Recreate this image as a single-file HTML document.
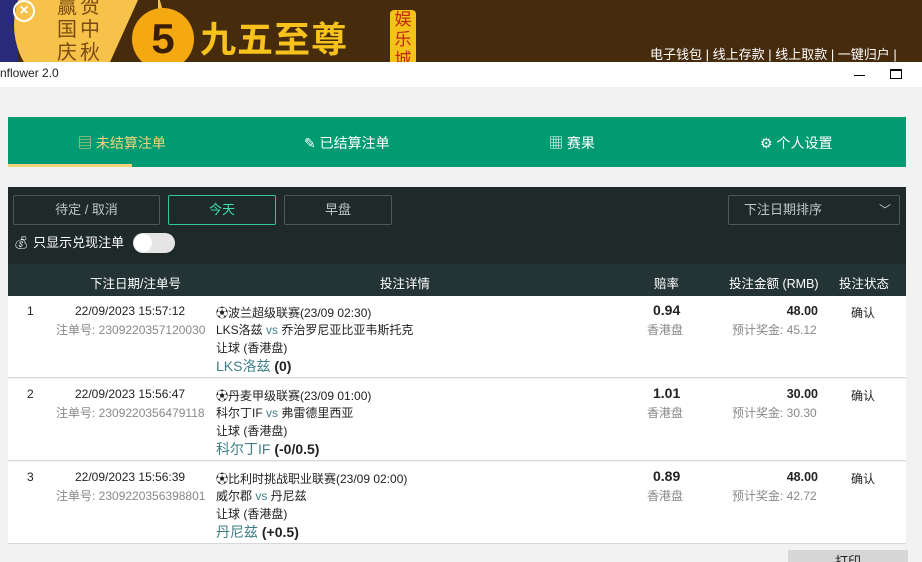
<!DOCTYPE html>
<html><head><meta charset="utf-8"><style>
*{margin:0;padding:0;box-sizing:border-box}
html,body{width:922px;height:562px;overflow:hidden}
body{background:#f2f2f2;font-family:"Liberation Sans","Noto Sans CJK SC",sans-serif;font-size:12px;color:#222;position:relative}
.a{position:absolute;white-space:nowrap}
.banner{left:0;top:0;width:922px;height:62px;background:#472b0d;overflow:hidden}
.nav{left:8px;top:117px;width:898px;height:50px;background:#009b72;color:#fff;font-size:14px}
.dark{left:8px;top:187px;width:898px;height:77px;background:#1e2a2a}
.th{left:8px;top:264px;width:898px;height:32px;background:#243434;color:#fff;font-size:12.5px}
.row{left:8px;width:898px;height:82px;background:#fff;border-bottom:1px solid #d8d8d8}
.btn{height:30px;border:1px solid #4d5757;color:#bfc5c5;font-size:13px;text-align:center;line-height:28px;border-radius:2px}
.g{color:#888}
.t{color:#3f7f86}
.amt{right:88px;top:8px;font-weight:bold;font-size:12.5px}
</style></head><body>
<div class="a banner">
 <div class="a" style="left:0;top:0;width:18px;height:62px;background:#2a2a7a"></div>
 <div class="a" style="left:14px;top:-50px;width:150px;height:150px;border-radius:50%;background:#f7c24a"></div>
 <div class="a" style="left:110px;top:0;width:0;height:0;border-left:28px solid transparent;border-bottom:62px solid #472b0d"></div>
 <div class="a" style="left:138px;top:0;width:20px;height:62px;background:#472b0d"></div>
 <div class="a" style="left:13px;top:0;width:22px;height:22px;border-radius:50%;border:2px solid #fff;color:#fff;font-size:16px;line-height:17px;text-align:center;font-weight:bold">×</div>
 <div class="a" style="left:57px;top:-4px;font-size:20px;line-height:23px;color:#7a4b10;width:46px;white-space:normal;letter-spacing:3px">赢贺国中庆秋</div>
 <div class="a" style="left:132px;top:8px;width:62px;height:62px;border-radius:50%;background:#f5a911;color:#3a1d05;font-size:42px;font-weight:bold;text-align:center;line-height:62px">5</div>
 <div class="a" style="left:200px;top:18px;font-size:36px;font-weight:bold;color:#f7c21c;line-height:44px;letter-spacing:1px">九五至尊</div>
 <div class="a" style="left:390px;top:10px;width:26px;height:56px;background:#f5c21a;border-radius:4px;color:#c0280f;font-size:17px;line-height:20px;text-align:center;white-space:normal">娱乐城</div>
 <div class="a" style="left:650px;top:44px;color:#fff;font-size:13px">电子钱包 | 线上存款 | 线上取款 | 一键归户 |</div>
</div>
<div class="a" style="left:0;top:62px;width:922px;height:25px;background:#fff"></div>
<div class="a" style="left:0;top:66px;font-size:12px;color:#222">nflower 2.0</div>
<div class="a" style="left:854px;top:75px;width:11px;height:1px;background:#000"></div>
<div class="a" style="left:890px;top:69px;width:12px;height:10px;border:1px solid #000;border-top-width:2px"></div>

<div class="a nav">
 <div class="a" style="left:70px;top:16px;color:#f2d37a">▤ 未结算注单</div>
 <div class="a" style="left:296px;top:16px">✎ 已结算注单</div>
 <div class="a" style="left:541px;top:16px">▦ 赛果</div>
 <div class="a" style="left:752px;top:16px">⚙ 个人设置</div>
 <div class="a" style="left:0;top:47px;width:124px;height:3px;background:#f2d37a"></div>
</div>

<div class="a dark">
 <div class="a btn" style="left:5px;top:8px;width:147px">待定 / 取消</div>
 <div class="a btn" style="left:160px;top:8px;width:108px;border-color:#2fc99a;color:#3ddfac">今天</div>
 <div class="a btn" style="left:276px;top:8px;width:108px">早盘</div>
 <div class="a btn" style="left:720px;top:8px;width:172px;text-align:left;padding-left:15px">下注日期排序<span class="a" style="right:8px;top:0;font-size:12px">﹀</span></div>
 <div class="a" style="left:5px;top:45px;color:#fff;font-size:13px">💰︎ 只显示兑现注单</div>
 <div class="a" style="left:125px;top:46px;width:42px;height:20px;border-radius:10px;background:#e5e5e5"></div>
 <div class="a" style="left:126px;top:47px;width:18px;height:18px;border-radius:50%;background:#fff"></div>
</div>
<div class="a th">
 <div class="a" style="left:82px;top:9px">下注日期/注单号</div>
 <div class="a" style="left:372px;top:9px">投注详情</div>
 <div class="a" style="left:646px;top:9px">赔率</div>
 <div class="a" style="left:721px;top:9px">投注金额 (RMB)</div>
 <div class="a" style="left:831px;top:9px">投注状态</div>
</div>

<div class="a row" style="top:296px">
 <div class="a" style="left:19px;top:8px">1</div>
 <div class="a" style="left:67px;top:8px">22/09/2023 15:57:12</div>
 <div class="a g" style="left:48px;top:25px">注单号: 2309220357120030</div>
 <div class="a" style="left:208px;top:8px">⚽︎波兰超级联赛(23/09 02:30)</div>
 <div class="a" style="left:208px;top:25px">LKS洛兹 <span class="t">vs</span> 乔治罗尼亚比亚韦斯托克</div>
 <div class="a" style="left:208px;top:43px">让球 (香港盘)</div>
 <div class="a" style="left:208px;top:60px;font-size:14px"><span class="t">LKS洛兹</span> <b>(0)</b></div>
 <div class="a" style="left:645px;top:6px;font-size:14px;font-weight:bold">0.94</div>
 <div class="a g" style="left:639px;top:25px">香港盘</div>
 <div class="a amt">48.00</div>
 <div class="a g" style="left:724px;top:25px">预计奖金: 45.12</div>
 <div class="a" style="left:843px;top:8px">确认</div>
</div>
<div class="a row" style="top:379px">
 <div class="a" style="left:19px;top:8px">2</div>
 <div class="a" style="left:67px;top:8px">22/09/2023 15:56:47</div>
 <div class="a g" style="left:48px;top:25px">注单号: 2309220356479118</div>
 <div class="a" style="left:208px;top:8px">⚽︎丹麦甲级联赛(23/09 01:00)</div>
 <div class="a" style="left:208px;top:25px">科尔丁IF <span class="t">vs</span> 弗雷德里西亚</div>
 <div class="a" style="left:208px;top:43px">让球 (香港盘)</div>
 <div class="a" style="left:208px;top:60px;font-size:14px"><span class="t">科尔丁IF</span> <b>(-0/0.5)</b></div>
 <div class="a" style="left:645px;top:6px;font-size:14px;font-weight:bold">1.01</div>
 <div class="a g" style="left:639px;top:25px">香港盘</div>
 <div class="a amt">30.00</div>
 <div class="a g" style="left:724px;top:25px">预计奖金: 30.30</div>
 <div class="a" style="left:843px;top:8px">确认</div>
</div>
<div class="a row" style="top:462px">
 <div class="a" style="left:19px;top:8px">3</div>
 <div class="a" style="left:67px;top:8px">22/09/2023 15:56:39</div>
 <div class="a g" style="left:48px;top:25px">注单号: 2309220356398801</div>
 <div class="a" style="left:208px;top:8px">⚽︎比利时挑战职业联赛(23/09 02:00)</div>
 <div class="a" style="left:208px;top:25px">威尔郡 <span class="t">vs</span> 丹尼兹</div>
 <div class="a" style="left:208px;top:43px">让球 (香港盘)</div>
 <div class="a" style="left:208px;top:60px;font-size:14px"><span class="t">丹尼兹</span> <b>(+0.5)</b></div>
 <div class="a" style="left:645px;top:6px;font-size:14px;font-weight:bold">0.89</div>
 <div class="a g" style="left:639px;top:25px">香港盘</div>
 <div class="a amt">48.00</div>
 <div class="a g" style="left:724px;top:25px">预计奖金: 42.72</div>
 <div class="a" style="left:843px;top:8px">确认</div>
</div>
<div class="a" style="left:788px;top:550px;width:120px;height:12px;overflow:hidden;background:#d6d6d6;border-radius:2px 2px 0 0;text-align:center;font-size:13px;line-height:24px">打印</div>
</body></html>
